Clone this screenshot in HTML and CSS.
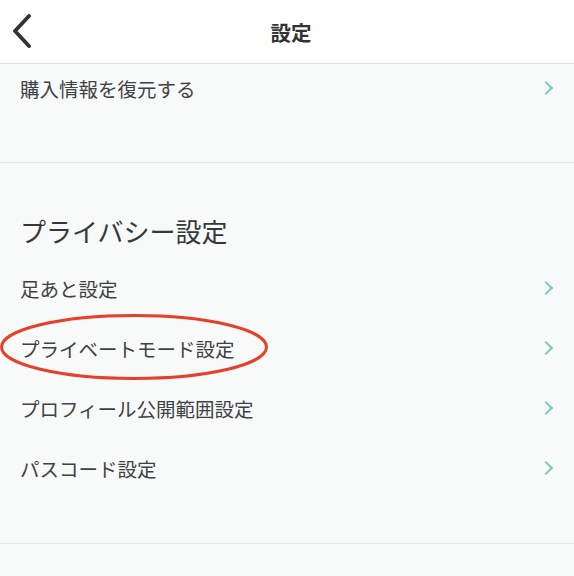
FILE: index.html
```html
<!DOCTYPE html>
<html lang="ja">
<head>
<meta charset="utf-8">
<link rel="stylesheet" href="styles.css">
</head>
<body>
<header class="header">
  <button class="back" aria-label="戻る">
    <svg width="22" height="34" viewBox="0 0 22 34"><path d="M18 2 L4 17 L18 32" fill="none" stroke="#333" stroke-width="3.8" stroke-linecap="round" stroke-linejoin="round"/></svg>
  </button>
  <h1 class="title">設定</h1>
</header>
<main class="content">
  <section class="section section-top">
    <div class="row row-short"><span>購入情報を復元する</span><i class="chev"></i></div>
  </section>
  <section class="section section-privacy">
    <h2 class="heading">プライバシー設定</h2>
    <div class="row"><span>足あと設定</span><i class="chev"></i></div>
    <div class="row row-marked"><span>プライベートモード設定</span><i class="chev"></i>
      <svg class="mark" width="272" height="72" viewBox="0 0 272 72"><ellipse cx="134" cy="36" rx="132.5" ry="31.5" fill="none" stroke="#e6402a" stroke-width="3"/></svg>
    </div>
    <div class="row"><span>プロフィール公開範囲設定</span><i class="chev"></i></div>
    <div class="row"><span>パスコード設定</span><i class="chev"></i></div>
  </section>
</main>
</body>
</html>
```
FILE: styles.css
```css
* { box-sizing: border-box; margin: 0; padding: 0; }
html, body { width: 574px; height: 576px; overflow: hidden; }
body {
  background: #f8f9f9;
  font-family: "Noto Sans CJK JP", "Noto Sans", sans-serif;
  color: #3f4245;
}
.header {
  height: 64px;
  background: #fff;
  border-bottom: 1.5px solid #dedfe0;
  display: flex;
  align-items: center;
  justify-content: center;
  position: relative;
}
.back {
  position: absolute;
  left: 11px;
  top: 14px;
  background: none;
  border: 0;
  width: 22px;
  height: 34px;
}
.title {
  font-size: 20.5px;
  font-weight: 700;
  color: #333;
  padding-left: 8px;
}
.section { border-bottom: 1.5px solid #e6e8e8; }
.section-top { height: 99px; }
.section-privacy { padding-top: 44px; height: 381px; }
.heading {
  font-size: 26px;
  font-weight: 400;
  line-height: 48px;
  padding-left: 20px;
  margin-bottom: 3px;
  color: #36393c;
}
.row {
  height: 60px;
  display: flex;
  align-items: center;
  justify-content: space-between;
  padding: 0 23px 0 20px;
  font-size: 19.5px;
  position: relative;
}
.row-short { height: 48px; }
.chev {
  width: 10px;
  height: 10px;
  border-top: 2px solid #79c8be;
  border-right: 2px solid #79c8be;
  transform: rotate(45deg);
}
.mark {
  position: absolute;
  left: 0;
  top: -7px;
  pointer-events: none;
}
```
